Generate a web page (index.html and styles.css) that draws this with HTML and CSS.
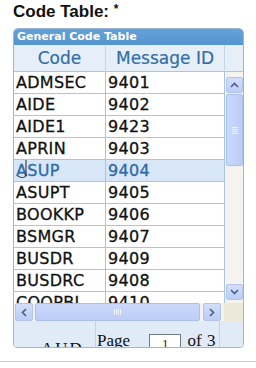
FILE: index.html
```html
<!DOCTYPE html>
<html lang="en">
<head>
  <meta charset="UTF-8">
  <title>Code Table</title>
  <link rel="stylesheet" href="styles.css">
</head>
<body>

  <div class="label">Code Table: <span class="req">*</span></div>

  <div class="panel">
    <div class="caption">General Code Table</div>

    <div class="cols">
      <div class="col">Code</div>
      <div class="col">Message ID</div>
      <div class="col"></div>
    </div>

    <div class="main">
      <div class="rows">
        <div class="row"><span>ADMSEC</span><span>9401</span></div>
        <div class="row"><span>AIDE</span><span>9402</span></div>
        <div class="row"><span>AIDE1</span><span>9423</span></div>
        <div class="row"><span>APRIN</span><span>9403</span></div>
        <div class="row sel"><span>ASUP</span><span>9404</span></div>
        <div class="row"><span>ASUPT</span><span>9405</span></div>
        <div class="row"><span>BOOKKP</span><span>9406</span></div>
        <div class="row"><span>BSMGR</span><span>9407</span></div>
        <div class="row"><span>BUSDR</span><span>9409</span></div>
        <div class="row"><span>BUSDRC</span><span>9408</span></div>
        <div class="row"><span>COOPBL</span><span>9410</span></div>
      </div>
      <div class="vbar">
        <div class="btn">
          <svg width="9" height="6" viewBox="0 0 9 6"><path d="M1 5 L4.5 1.5 L8 5" fill="none" stroke="#4b5f86" stroke-width="1.6"/></svg>
        </div>
        <div class="vthumb"><i></i><i></i><i></i><i></i></div>
        <div class="vtrack"></div>
        <div class="btn">
          <svg width="9" height="6" viewBox="0 0 9 6"><path d="M1 1 L4.5 4.5 L8 1" fill="none" stroke="#4b5f86" stroke-width="1.6"/></svg>
        </div>
      </div>
    </div>

    <div class="hbar">
      <div class="btn">
        <svg width="6" height="9" viewBox="0 0 6 9"><path d="M5 1 L1.5 4.5 L5 8" fill="none" stroke="#4b5f86" stroke-width="1.6"/></svg>
      </div>
      <div class="hthumb"><i></i><i></i><i></i><i></i></div>
      <div class="btn">
        <svg width="6" height="9" viewBox="0 0 6 9"><path d="M1 1 L4.5 4.5 L1 8" fill="none" stroke="#4b5f86" stroke-width="1.6"/></svg>
      </div>
      <div class="corner"></div>
    </div>

    <div class="foot">
      <div class="cell first">AUD</div>
      <div class="cell pager">Page <span class="box">1</span> of 3</div>
      <div class="cell"></div>
    </div>

    <svg class="ibeam" width="12" height="20" viewBox="0 0 12 20">
      <path d="M10 1 V17 M10 17 C8 19 5 19 2 17" fill="none" stroke="#222" stroke-width="1"/>
    </svg>
  </div>

  <div class="rule"></div>

</body>
</html>
```

FILE: styles.css
```css
* {
  margin: 0;
  padding: 0;
  box-sizing: border-box;
}

body {
  background: #fff;
  font-family: "DejaVu Sans", sans-serif;
  color: #111;
}

.label {
  margin: 2px 0 0 13px;
  height: 26px;
  font-family: "Liberation Sans", sans-serif;
  font-weight: bold;
  font-size: 17px;
  line-height: 20px;
}

.label .req {
  font-size: 12px;
  vertical-align: top;
  line-height: 14px;
}

.panel {
  position: relative;
  margin-left: 13px;
  width: 231px;
  height: 320px;
  border: 1px solid #9cb8d6;
  border-radius: 5px 5px 4px 4px;
  overflow: hidden;
  display: flex;
  flex-direction: column;
}

.caption {
  height: 16px;
  flex: none;
  background: linear-gradient(#64a2d8, #5595cf);
  color: #fff;
  font-weight: bold;
  font-size: 11px;
  line-height: 16px;
  padding-left: 3px;
}

.cols {
  flex: none;
  display: grid;
  grid-template-columns: 92px 119px 18px;
  height: 27px;
  background: #e6eff8;
  border-bottom: 1px solid #a9c5e1;
}

.col {
  border-right: 1px solid #c4d7ea;
  color: #336ea8;
  font-size: 17px;
  line-height: 26px;
  text-align: center;
  -webkit-text-stroke: 0.2px currentColor;
}

.col:last-child {
  border-right: 0;
}

.main {
  flex: none;
  height: 231px;
  display: flex;
  overflow: hidden;
}

.rows {
  width: 211px;
  flex: none;
}

.row {
  display: grid;
  grid-template-columns: 92px 119px;
  height: 22px;
  border-bottom: 1px solid #a9c5e1;
  font-size: 16px;
  line-height: 21px;
  letter-spacing: 0.3px;
  -webkit-text-stroke: 0.3px currentColor;
}

.row span {
  padding-left: 2px;
  border-right: 1px solid #a9c5e1;
}

.row.sel {
  background: #d7e7f7;
  color: #2f6aa6;
}

.vbar {
  width: 18px;
  flex: none;
  background: #f4f3ef;
  display: flex;
  flex-direction: column;
  padding: 5px 0 3px 1px;
}

.btn {
  flex: none;
  width: 17px;
  height: 16px;
  background: linear-gradient(#d3defa, #bccdf6);
  border: 1px solid #b2c3ec;
  border-radius: 2px;
  display: flex;
  align-items: center;
  justify-content: center;
}

.vthumb {
  flex: none;
  height: 72px;
  margin-top: 1px;
  background: linear-gradient(90deg, #cad8fb, #bccdf7);
  border: 1px solid #a9bff0;
  border-radius: 2px;
  display: flex;
  flex-direction: column;
  align-items: center;
  justify-content: center;
  gap: 1px;
}

.vthumb i {
  display: block;
  width: 6px;
  height: 1px;
  background: #eef2fd;
}

.vtrack {
  flex: 1;
}

.hbar {
  flex: none;
  height: 18px;
  display: flex;
  background: #f4f3ef;
  padding-left: 1px;
}

.hbar .btn {
  width: 18px;
  height: 18px;
}

.hthumb {
  flex: none;
  width: 165px;
  margin: 0 3px 0 2px;
  background: linear-gradient(#cad8fb, #bccdf7);
  border: 1px solid #a9bff0;
  border-radius: 2px;
  display: flex;
  align-items: center;
  justify-content: center;
  gap: 1px;
}

.hthumb i {
  display: block;
  width: 1px;
  height: 6px;
  background: #eef2fd;
}

.corner {
  flex: 1;
  margin-left: 3px;
  background: #ece9d8;
}

.foot {
  flex: 1;
  display: grid;
  grid-template-columns: 82px 124px 1fr;
  background: #e0ebf7;
  overflow: hidden;
  font-family: "Liberation Serif", serif;
  font-size: 17px;
}

.foot .cell {
  border-right: 1px solid #c6d4e2;
  padding-top: 11px;
  line-height: 18px;
}

.foot .cell:last-child {
  border-right: 0;
}

.foot .first {
  padding: 19px 0 0 27px;
  letter-spacing: 2px;
}

.foot .pager {
  padding-left: 1px;
  word-spacing: 1px;
}

.foot .box {
  display: inline-block;
  width: 32px;
  height: 18px;
  margin: 2px 1px 0 14px;
  background: #fff;
  border: 1px solid #6e7a88;
  font-size: 12px;
  text-align: center;
  vertical-align: top;
}

.ibeam {
  position: absolute;
  left: 2px;
  top: 130px;
}

.rule {
  margin-top: 13px;
  height: 1px;
  background: #cfcfcf;
}
```
